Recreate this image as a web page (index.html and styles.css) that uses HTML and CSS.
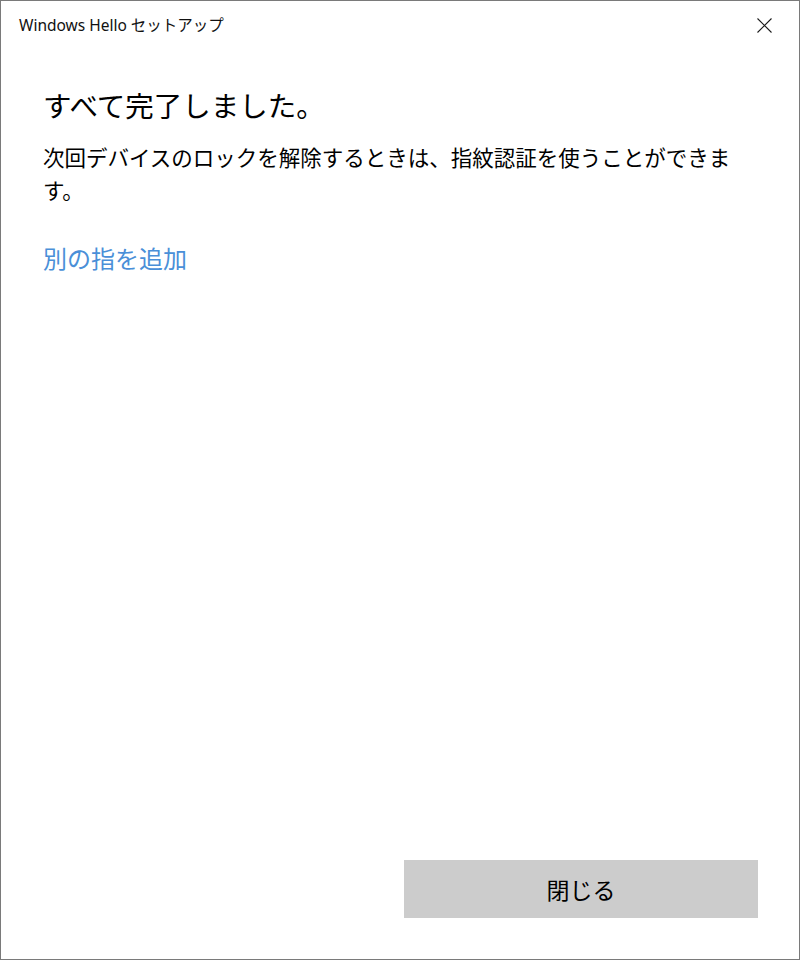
FILE: index.html
```html
<!DOCTYPE html>
<html lang="ja">
<head>
<meta charset="utf-8">
<title>Windows Hello セットアップ</title>
<link rel="stylesheet" href="styles.css">
</head>
<body>
<div class="window">
  <div class="titlebar">
    <span class="title">Windows Hello セットアップ</span>
    <svg class="close" width="15" height="15" viewBox="0 0 15 15" aria-label="閉じる">
      <path d="M0.5 0.5 L14.5 14.5 M14.5 0.5 L0.5 14.5" stroke="#1a1a1a" stroke-width="1.1" fill="none"/>
    </svg>
  </div>
  <div class="content">
    <h1 class="heading">すべて完了しました。</h1>
    <p class="message">次回デバイスのロックを解除するときは、指紋認証を使うことができます。</p>
    <a class="link" href="#">別の指を追加</a>
  </div>
  <div class="footer">
    <button class="btn">閉じる</button>
  </div>
</div>
</body>
</html>
```
FILE: styles.css
```css
html, body {
  margin: 0;
  padding: 0;
  background: #ffffff;
}
.window {
  width: 800px;
  height: 960px;
  box-sizing: border-box;
  border: 1px solid #7a7a7a;
  display: flex;
  flex-direction: column;
  font-family: "Noto Sans", "Noto Sans CJK JP", sans-serif;
  color: #000;
}
.titlebar {
  height: 50px;
  box-sizing: border-box;
  padding-bottom: 3px;
  display: flex;
  align-items: center;
  justify-content: space-between;
  padding-left: 18px;
  padding-right: 27px;
}
.title {
  font-size: 15.5px;
  color: #111;
}
.close {
  display: block;
  margin-top: 2px;
}
.content {
  padding-left: 42px;
  display: flex;
  flex-direction: column;
  align-items: flex-start;
  font-family: "Noto Sans CJK JP", sans-serif;
}
.heading {
  margin: 34px 0 0 0;
  font-size: 28.5px;
  line-height: 40px;
  font-weight: 400;
}
.message {
  margin: 15px 0 0 0;
  width: 700px;
  font-size: 21.5px;
  line-height: 33px;
}
.link {
  margin-top: 35px;
  font-size: 24px;
  line-height: 33px;
  color: #4a8fd8;
  text-decoration: none;
}
.footer {
  margin-top: auto;
  display: flex;
  justify-content: flex-end;
  padding-right: 41px;
  padding-bottom: 41px;
}
.btn {
  width: 354px;
  height: 58px;
  border: none;
  background: #cccccc;
  font-family: "Noto Sans CJK JP", sans-serif;
  font-size: 23px;
  color: #000;
  padding: 0;
}
```
